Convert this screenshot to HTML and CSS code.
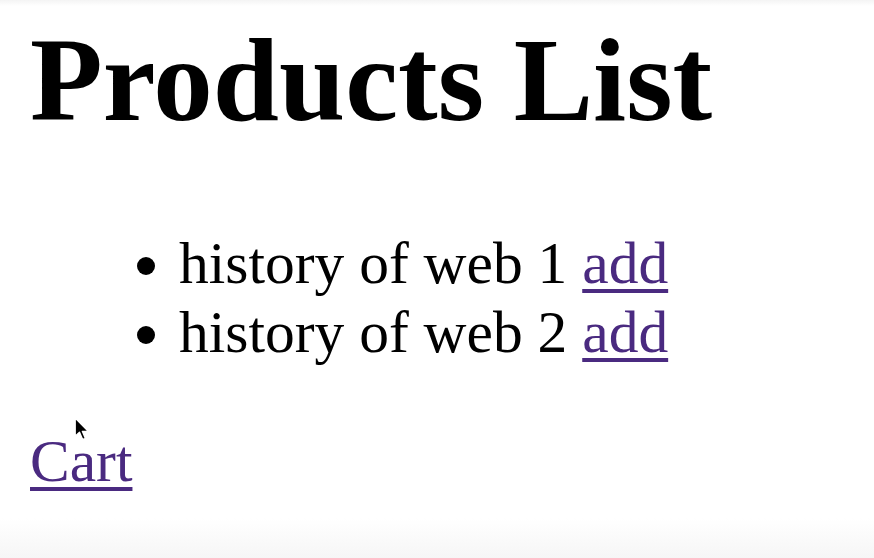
FILE: index.html
```html
<!DOCTYPE html>
<html lang="en">
<head>
  <meta charset="UTF-8">
  <title>Products List</title>
  <link rel="stylesheet" href="styles.css">
</head>
<body>

  <div class="page">
    <h1 class="page-title">Products List</h1>
    <ul class="product-list">
      <li>history of web 1 <a href="#" class="add-link">add</a></li>
      <li>history of web 2 <a href="#" class="add-link">add</a></li>
    </ul>
    <a href="#" class="cart-link">Cart</a>
  </div>

  <svg class="cursor" width="16" height="25" viewBox="0 0 14 22">
    <path d="M1 1 L1 17 L4.8 13.4 L7.6 19.8 L10 18.8 L7.3 12.6 L12.5 12.6 Z" fill="#000" stroke="#fff" stroke-width="1.2" stroke-linejoin="round"/>
  </svg>

</body>
</html>
```

FILE: styles.css
```css
html,
body {
  margin: 0;
  height: 100%;
}
body {
  font-family: 'Liberation Serif', 'Times New Roman', serif;
  color: #000;
  background: linear-gradient(to bottom, #f4f4f4 0, #fff 6px, #fff 518px, #f6f6f6 558px);
  position: relative;
  overflow: hidden;
}
.page {
  padding: 0 30px;
}
.page-title {
  font-size: 119px;
  font-weight: 700;
  margin: 12px 0 80px;
}
.product-list {
  font-size: 59.5px;
  margin: 0 0 59.5px;
  padding-left: 149px;
}
.product-list li {
  line-height: normal;
}
.add-link,
.cart-link {
  color: #4a2a80;
  text-decoration: underline;
  text-decoration-thickness: 4px;
  text-underline-offset: 6px;
}
.cart-link {
  font-size: 59.5px;
}
.cursor {
  position: absolute;
  left: 74px;
  top: 417px;
}
```
